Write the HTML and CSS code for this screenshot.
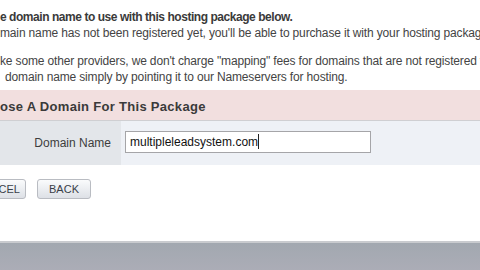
FILE: index.html
```html
<!DOCTYPE html>
<html lang="en">
<head>
<meta charset="UTF-8">
<title>Choose A Domain</title>
<link rel="stylesheet" href="styles.css">
</head>
<body>

<div class="page">
  <div class="intro">
    <p class="lead">e domain name to use with this hosting package below.</p>
    <p class="line">main name has not been registered yet, you'll be able to purchase it with your hosting package</p>
    <p class="gap"></p>
    <p class="line">ke some other providers, we don't charge "mapping" fees for domains that are not registered w</p>
    <p class="line indent">domain name simply by pointing it to our Nameservers for hosting.</p>
  </div>

  <div class="sectionhead">ose A Domain For This Package</div>

  <div class="row">
    <div class="label">Domain Name</div>
    <div class="field">
      <div class="input">multipleleadsystem.com<span class="caret"></span></div>
    </div>
  </div>

  <div class="actions">
    <button class="btn cancel">CEL</button>
    <button class="btn">BACK</button>
  </div>
</div>

<div class="footer"></div>

</body>
</html>
```

FILE: styles.css
```css
html, body{
  margin:0;
  padding:0;
  background:#fff;
  overflow:hidden;
}
body{
  width:480px;
  height:270px;
  font-family:"Liberation Sans", Arial, sans-serif;
  color:#444;
}
.page{
  height:241px;
}
.intro{
  padding-top:9px;
  height:81px;
  white-space:nowrap;
  overflow:hidden;
}
.intro p{
  margin:0;
  font-size:12px;
  line-height:16px;
  letter-spacing:-0.15px;
}
.intro .lead{
  font-weight:bold;
  color:#3a3a3a;
  letter-spacing:-0.45px;
}
.gap{
  height:12px;
}
.indent{
  padding-left:5px;
}
.sectionhead{
  background:#f2dfdf;
  height:30px;
  line-height:34px;
  font-size:13px;
  font-weight:bold;
  color:#3a3a3a;
  border-bottom:1px solid #cfcfd2;
  letter-spacing:0.3px;
}
.row{
  display:grid;
  grid-template-columns:121px 1fr;
  height:36px;
  border-bottom:3px solid #85888d;
}
.label{
  background:#e3e6ea;
  text-align:right;
  padding-right:10px;
  font-size:12px;
  line-height:44px;
  color:#3d3d3d;
}
.field{
  background:#eef1f6;
  padding:10px 0 0 4px;
}
.input{
  width:240px;
  height:20px;
  border:1px solid #a5a5a8;
  background:#fff;
  font-size:12px;
  line-height:20px;
  padding-left:4px;
  color:#111;
}
.caret{
  display:inline-block;
  width:1px;
  height:15px;
  background:#222;
  vertical-align:-3px;
}
.actions{
  display:flex;
  gap:11px;
  padding-top:19px;
  margin-left:-28px;
}
.btn{
  height:20px;
  width:54px;
  font-family:"Liberation Sans", Arial, sans-serif;
  font-size:11px;
  color:#3a3f48;
  border:1px solid #b9bcc2;
  border-radius:3px;
  background:linear-gradient(#fafbfc, #dde0e6);
  padding:0;
}
.cancel{
  text-align:right;
  padding-right:5px;
}
.footer{
  height:29px;
  border-top:2px solid #c9cbcf;
  background:linear-gradient(#a2a8b0, #acadb7);
}
```
